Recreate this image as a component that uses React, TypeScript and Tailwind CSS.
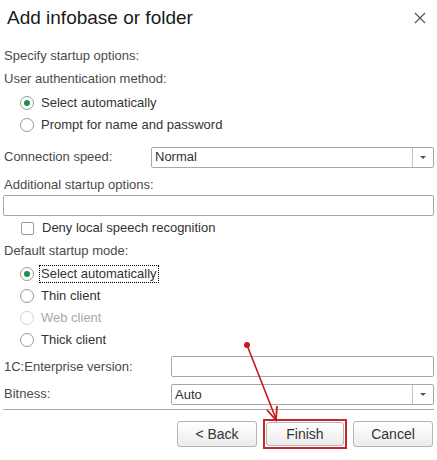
import React from "react";

const font = { fontFamily: '"Liberation Sans", Arial, sans-serif' };

const Radio = ({ label, checked = false, disabled = false, focused = false }: { label: string; checked?: boolean; disabled?: boolean; focused?: boolean }) => (
  <div className="flex items-center h-[22px] pl-[17px]">
    <span className={"w-[14px] h-[14px] rounded-full border bg-white flex items-center justify-center shrink-0 " + (disabled ? "border-[#d4d4d4]" : "border-[#9a9a9a]")}>
      {checked && <span className="w-[6px] h-[6px] rounded-full bg-[#1f8f4e]" />}
    </span>
    <span className={"ml-[5px] px-[1px] text-[13px] leading-[16px] " + (disabled ? "text-[#a9a9a9]" : "text-[#333]") + (focused ? " border border-dotted border-black" : " border border-transparent")}>
      {label}
    </span>
  </div>
);

const Combo = ({ value, className = "" }: { value: string; className?: string }) => (
  <div className={"flex items-stretch h-[21px] border border-[#a8a8a8] rounded-[2px] bg-white " + className}>
    <div className="flex-1 flex items-center pl-[3px] text-[13px] text-[#333]">{value}</div>
    <div className="w-[21px] border-l border-[#c4c4c4] flex items-center justify-center">
      <span className="w-0 h-0 border-l-[3px] border-r-[3px] border-t-[3px] border-l-transparent border-r-transparent border-t-[#555]" />
    </div>
  </div>
);

const Btn = ({ label }: { label: string }) => (
  <div className="w-[80px] h-[26px] rounded-[3px] border border-[#b4b4b4] bg-gradient-to-b from-white to-[#ececec] flex items-center justify-center text-[14px] text-[#333]">
    {label}
  </div>
);

export default function App() {
  return (
    <div className="relative w-[437px] h-[460px] bg-white overflow-hidden text-[#4a4a4a]" style={font}>
      <div className="flex items-center justify-between h-[36px] pl-[7px] pr-[10px]">
        <span className="text-[19px] text-[#1a1a1a]">Add infobase or folder</span>
        <svg width="12" height="12" viewBox="0 0 12 12" className="mr-[1px]">
          <path d="M1 1 L11 11 M11 1 L1 11" stroke="#555" strokeWidth="1.2" />
        </svg>
      </div>
      <div className="h-[9px]" />
      <div className="px-[3px]">
        <div className="h-[22px] flex items-center pl-[1px] text-[13px]">Specify startup options:</div>
        <div className="h-[24px] flex items-center pl-[1px] text-[13px]">User authentication method:</div>
        <div className="h-[24px] flex items-center">
          <div className="w-full"><Radio label="Select automatically" checked /></div>
        </div>
        <div className="h-[20px] flex items-center">
          <div className="w-full"><Radio label="Prompt for name and password" /></div>
        </div>
        <div className="h-[10px]" />
        <div className="h-[24px] flex items-center">
          <span className="w-[148px] pl-[1px] text-[13px]">Connection speed:</span>
          <Combo value="Normal" className="flex-1" />
        </div>
        <div className="h-[6px]" />
        <div className="h-[20px] flex items-center pl-[1px] text-[13px]">Additional startup options:</div>
        <div className="h-[21px] border border-[#a8a8a8] rounded-[2px] bg-white" />
        <div className="h-[1px]" />
        <div className="h-[22px] flex items-center pl-[18px]">
          <span className="w-[13px] h-[13px] border border-[#9a9a9a] rounded-[2px] bg-white" />
          <span className="ml-[8px] text-[13px] text-[#333]">Deny local speech recognition</span>
        </div>
        <div className="h-[24px] flex items-center pl-[1px] text-[13px]">Default startup mode:</div>
        <Radio label="Select automatically" checked focused />
        <Radio label="Thin client" />
        <Radio label="Web client" disabled />
        <Radio label="Thick client" />
        <div className="h-[1px]" />
        <div className="h-[29px] flex items-center">
          <span className="w-[168px] pl-[1px] text-[13px]">1C:Enterprise version:</span>
          <div className="flex-1 h-[21px] border border-[#a8a8a8] rounded-[2px] bg-white" />
        </div>
        <div className="h-[27px] flex items-center">
          <span className="w-[168px] pl-[1px] text-[13px] -mt-[2px]">Bitness:</span>
          <Combo value="Auto" className="flex-1" />
        </div>
        <div className="h-[1px] mt-[1px] bg-[#a9a9a9]" />
        <div className="flex justify-end items-center gap-[6px] mt-[9px] pr-[1px]">
          <Btn label="< Back" />
          <div className="border-2 border-[#c3262b] p-[1px]">
            <div className="w-[78px] h-[24px] rounded-[3px] border border-[#b4b4b4] bg-gradient-to-b from-white to-[#ececec] flex items-center justify-center text-[14px] text-[#333]">
              Finish
            </div>
          </div>
          <Btn label="Cancel" />
        </div>
        <div className="h-[1px] mt-[11px] mx-[2px] bg-[#c4c4c4]" />
      </div>
      <svg className="absolute inset-0 pointer-events-none" width="437" height="460">
        <circle cx="247" cy="345" r="3" fill="#c81818" />
        <path d="M247 345 L276 419" stroke="#c81818" strokeWidth="1.6" fill="none" />
        <path d="M267 410 L276 420 L277 406" stroke="#c81818" strokeWidth="1.8" fill="none" />
      </svg>
    </div>
  );
}
